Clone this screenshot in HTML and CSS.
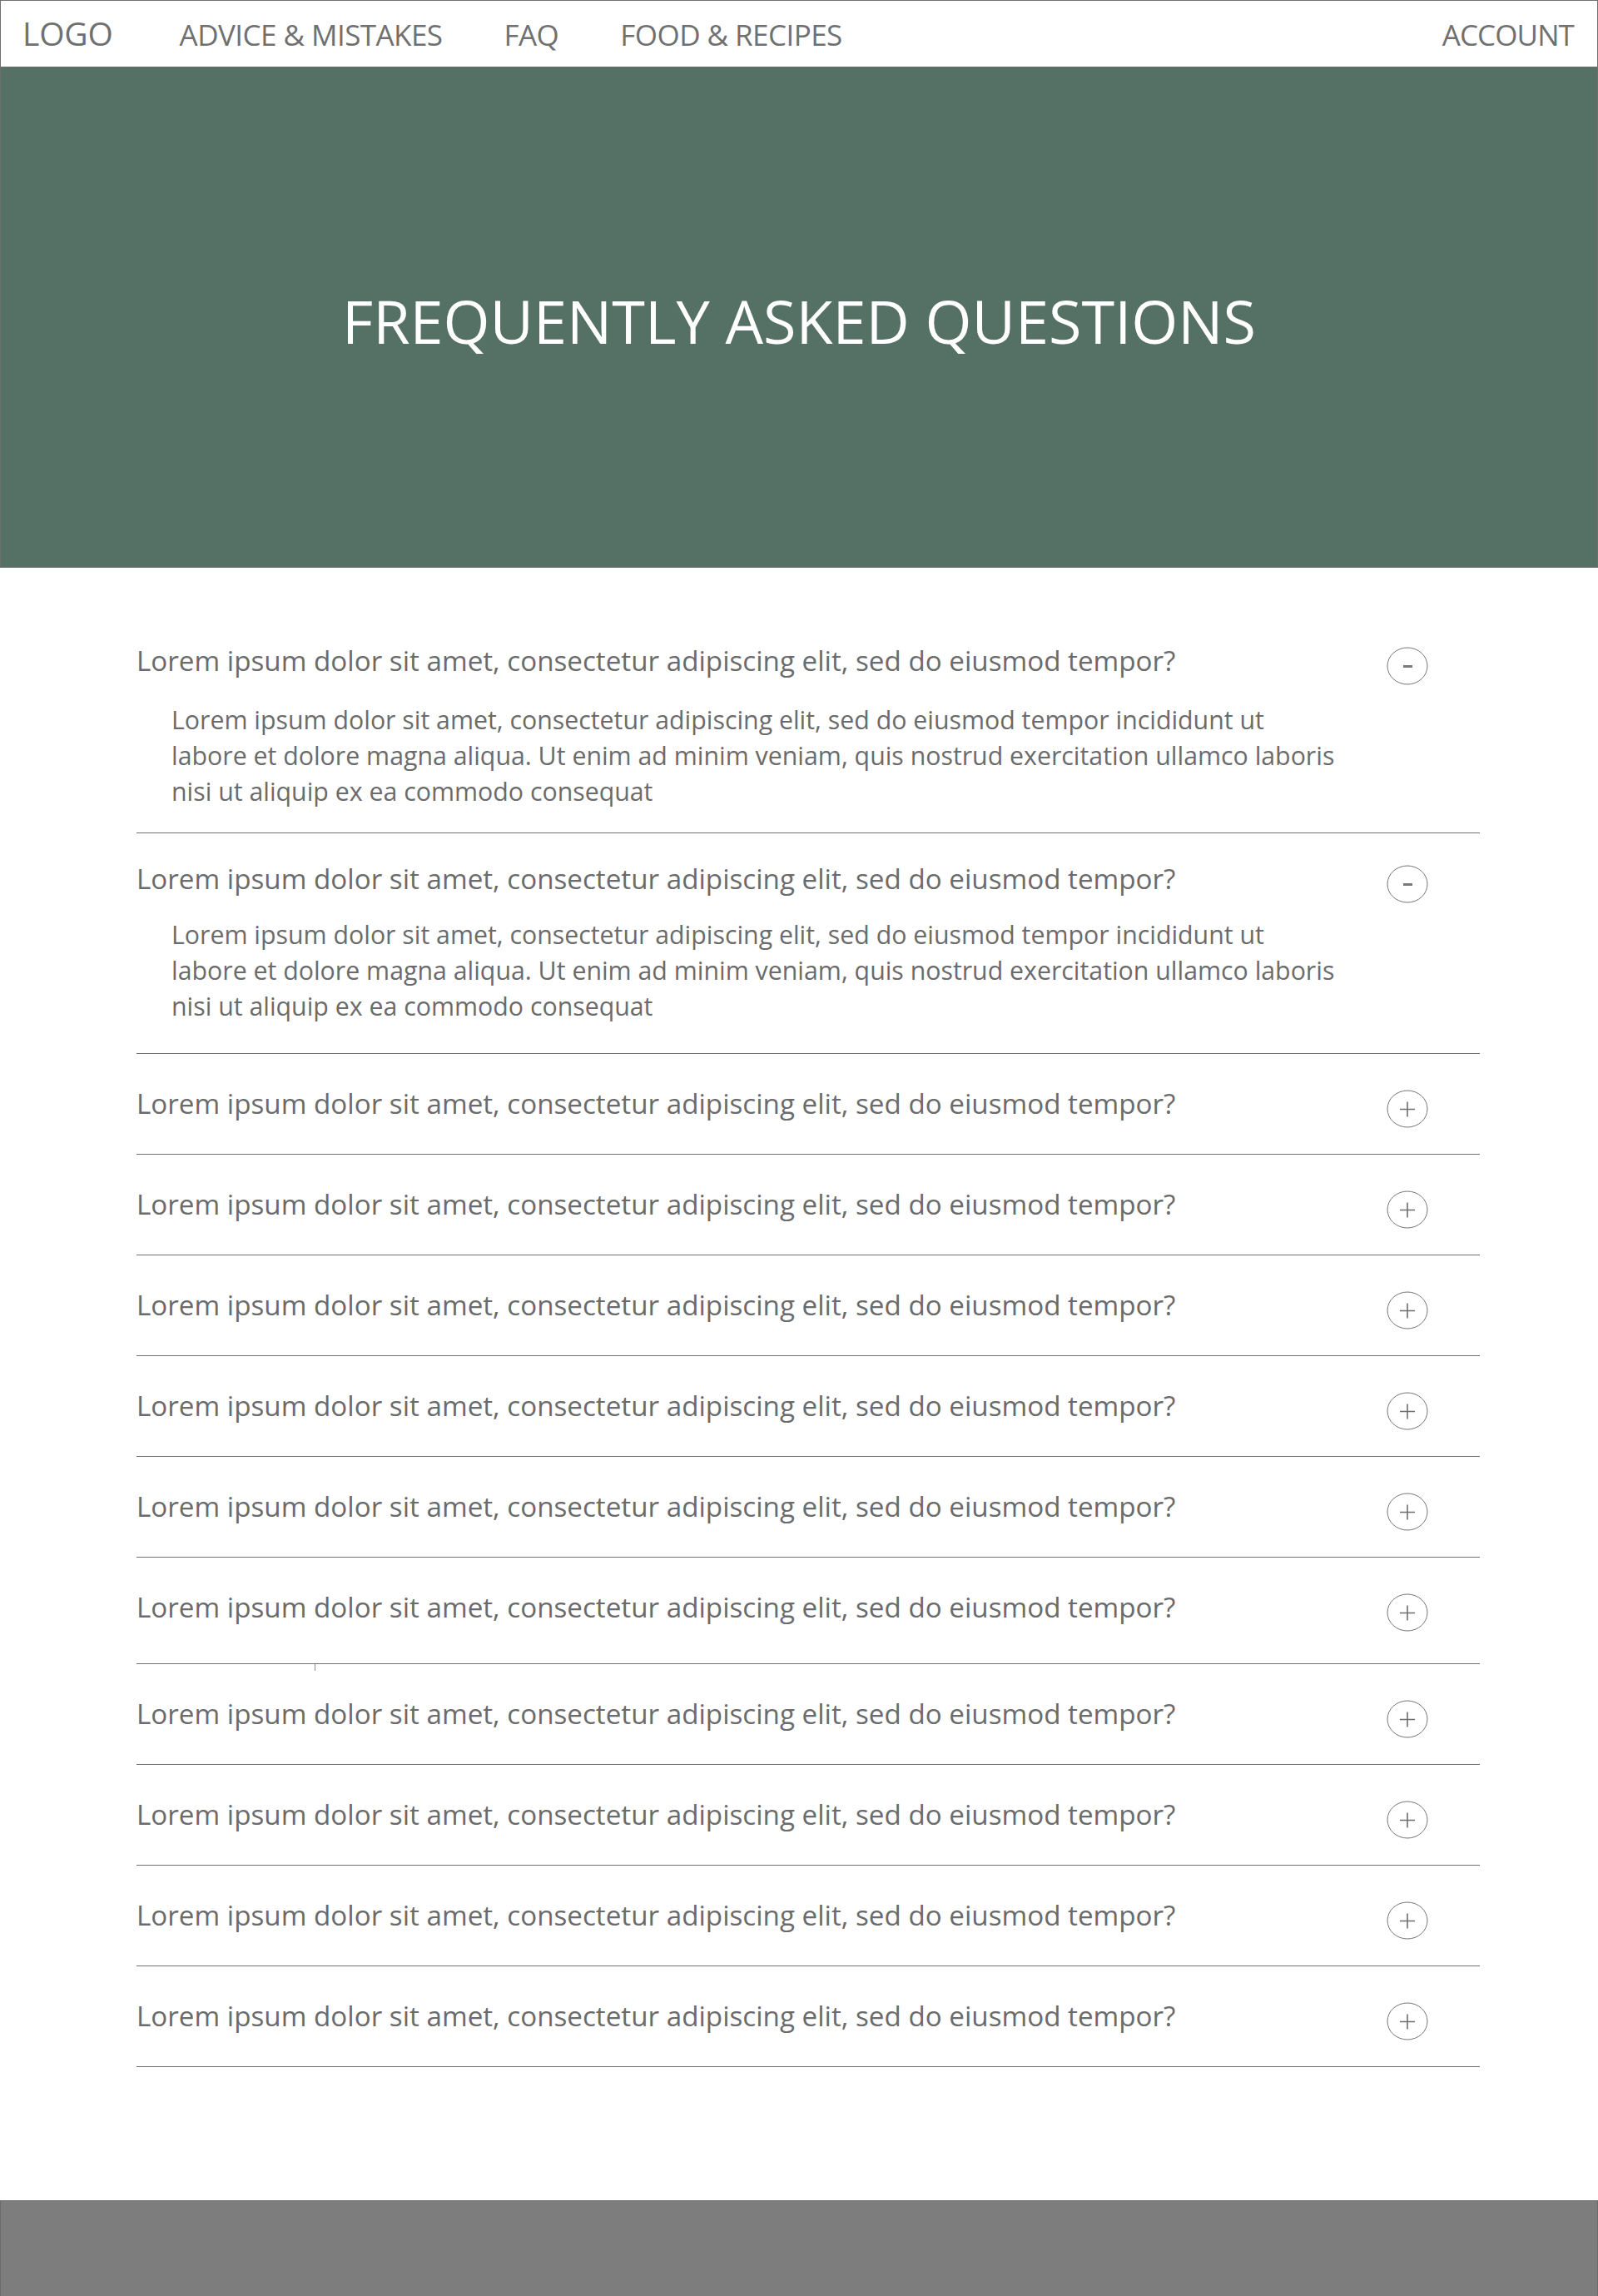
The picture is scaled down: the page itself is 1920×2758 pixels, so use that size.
FILE: index.html
```html
<!DOCTYPE html>
<html lang="en">
<head>
<meta charset="utf-8">
<title>FAQ</title>
<link rel="stylesheet" href="styles.css">
</head>
<body>
<header class="topbar">
  <div class="brand">LOGO</div>
  <nav class="menu">
    <a class="menu-link" href="#">ADVICE &amp; MISTAKES</a>
    <a class="menu-link" href="#">FAQ</a>
    <a class="menu-link" href="#">FOOD &amp; RECIPES</a>
  </nav>
  <a class="account" href="#">ACCOUNT</a>
</header>

<section class="hero">
  <h1 class="hero-title">FREQUENTLY ASKED QUESTIONS</h1>
</section>

<main class="faq">
  <ul class="faq-list">
    <li class="faq-item is-open">
      <div class="faq-body">
        <p class="faq-q">Lorem ipsum dolor sit amet, consectetur adipiscing elit, sed do eiusmod tempor?</p>
        <p class="faq-a">Lorem ipsum dolor sit amet, consectetur adipiscing elit, sed do eiusmod tempor incididunt ut labore et dolore magna aliqua. Ut enim ad minim veniam, quis nostrud exercitation ullamco laboris nisi ut aliquip ex ea commodo consequat</p>
      </div>
      <span class="toggle"><svg width="50" height="46" viewBox="0 0 50 46"><ellipse cx="25" cy="23" rx="24" ry="22" fill="none" stroke="#757575" stroke-width="1"/><line x1="20" y1="23.5" x2="31" y2="23.5" stroke="#7a7a7a" stroke-width="3"/></svg></span>
    </li>
    <li class="faq-item is-open">
      <div class="faq-body">
        <p class="faq-q">Lorem ipsum dolor sit amet, consectetur adipiscing elit, sed do eiusmod tempor?</p>
        <p class="faq-a">Lorem ipsum dolor sit amet, consectetur adipiscing elit, sed do eiusmod tempor incididunt ut labore et dolore magna aliqua. Ut enim ad minim veniam, quis nostrud exercitation ullamco laboris nisi ut aliquip ex ea commodo consequat</p>
      </div>
      <span class="toggle"><svg width="50" height="46" viewBox="0 0 50 46"><ellipse cx="25" cy="23" rx="24" ry="22" fill="none" stroke="#757575" stroke-width="1"/><line x1="20" y1="23.5" x2="31" y2="23.5" stroke="#7a7a7a" stroke-width="3"/></svg></span>
    </li>
    <li class="faq-item"><div class="faq-body"><p class="faq-q">Lorem ipsum dolor sit amet, consectetur adipiscing elit, sed do eiusmod tempor?</p></div><span class="toggle"><svg width="50" height="46" viewBox="0 0 50 46"><ellipse cx="25" cy="23" rx="24" ry="22" fill="none" stroke="#757575" stroke-width="1"/><path d="M16 23.5H34M25 14.5V32.5" stroke="#6e6e6e" stroke-width="1.6" fill="none"/></svg></span></li>
    <li class="faq-item"><div class="faq-body"><p class="faq-q">Lorem ipsum dolor sit amet, consectetur adipiscing elit, sed do eiusmod tempor?</p></div><span class="toggle"><svg width="50" height="46" viewBox="0 0 50 46"><ellipse cx="25" cy="23" rx="24" ry="22" fill="none" stroke="#757575" stroke-width="1"/><path d="M16 23.5H34M25 14.5V32.5" stroke="#6e6e6e" stroke-width="1.6" fill="none"/></svg></span></li>
    <li class="faq-item"><div class="faq-body"><p class="faq-q">Lorem ipsum dolor sit amet, consectetur adipiscing elit, sed do eiusmod tempor?</p></div><span class="toggle"><svg width="50" height="46" viewBox="0 0 50 46"><ellipse cx="25" cy="23" rx="24" ry="22" fill="none" stroke="#757575" stroke-width="1"/><path d="M16 23.5H34M25 14.5V32.5" stroke="#6e6e6e" stroke-width="1.6" fill="none"/></svg></span></li>
    <li class="faq-item"><div class="faq-body"><p class="faq-q">Lorem ipsum dolor sit amet, consectetur adipiscing elit, sed do eiusmod tempor?</p></div><span class="toggle"><svg width="50" height="46" viewBox="0 0 50 46"><ellipse cx="25" cy="23" rx="24" ry="22" fill="none" stroke="#757575" stroke-width="1"/><path d="M16 23.5H34M25 14.5V32.5" stroke="#6e6e6e" stroke-width="1.6" fill="none"/></svg></span></li>
    <li class="faq-item"><div class="faq-body"><p class="faq-q">Lorem ipsum dolor sit amet, consectetur adipiscing elit, sed do eiusmod tempor?</p></div><span class="toggle"><svg width="50" height="46" viewBox="0 0 50 46"><ellipse cx="25" cy="23" rx="24" ry="22" fill="none" stroke="#757575" stroke-width="1"/><path d="M16 23.5H34M25 14.5V32.5" stroke="#6e6e6e" stroke-width="1.6" fill="none"/></svg></span></li>
    <li class="faq-item is-tall"><div class="faq-body"><p class="faq-q">Lorem ipsum dolor sit amet, consectetur adipiscing elit, sed do eiusmod tempor?</p></div><span class="toggle"><svg width="50" height="46" viewBox="0 0 50 46"><ellipse cx="25" cy="23" rx="24" ry="22" fill="none" stroke="#757575" stroke-width="1"/><path d="M16 23.5H34M25 14.5V32.5" stroke="#6e6e6e" stroke-width="1.6" fill="none"/></svg></span></li>
    <li class="faq-item has-tick"><div class="faq-body"><p class="faq-q">Lorem ipsum dolor sit amet, consectetur adipiscing elit, sed do eiusmod tempor?</p></div><span class="toggle"><svg width="50" height="46" viewBox="0 0 50 46"><ellipse cx="25" cy="23" rx="24" ry="22" fill="none" stroke="#757575" stroke-width="1"/><path d="M16 23.5H34M25 14.5V32.5" stroke="#6e6e6e" stroke-width="1.6" fill="none"/></svg></span></li>
    <li class="faq-item"><div class="faq-body"><p class="faq-q">Lorem ipsum dolor sit amet, consectetur adipiscing elit, sed do eiusmod tempor?</p></div><span class="toggle"><svg width="50" height="46" viewBox="0 0 50 46"><ellipse cx="25" cy="23" rx="24" ry="22" fill="none" stroke="#757575" stroke-width="1"/><path d="M16 23.5H34M25 14.5V32.5" stroke="#6e6e6e" stroke-width="1.6" fill="none"/></svg></span></li>
    <li class="faq-item"><div class="faq-body"><p class="faq-q">Lorem ipsum dolor sit amet, consectetur adipiscing elit, sed do eiusmod tempor?</p></div><span class="toggle"><svg width="50" height="46" viewBox="0 0 50 46"><ellipse cx="25" cy="23" rx="24" ry="22" fill="none" stroke="#757575" stroke-width="1"/><path d="M16 23.5H34M25 14.5V32.5" stroke="#6e6e6e" stroke-width="1.6" fill="none"/></svg></span></li>
    <li class="faq-item"><div class="faq-body"><p class="faq-q">Lorem ipsum dolor sit amet, consectetur adipiscing elit, sed do eiusmod tempor?</p></div><span class="toggle"><svg width="50" height="46" viewBox="0 0 50 46"><ellipse cx="25" cy="23" rx="24" ry="22" fill="none" stroke="#757575" stroke-width="1"/><path d="M16 23.5H34M25 14.5V32.5" stroke="#6e6e6e" stroke-width="1.6" fill="none"/></svg></span></li>
  </ul>
</main>

<footer class="footer"></footer>
</body>
</html>
```

FILE: styles.css
```css
* { box-sizing: border-box; }
html, body { margin: 0; padding: 0; }
body {
  font-family: "Open Sans", "Noto Sans", sans-serif;
  color: #6b6b6b;
  background: #ffffff;
}
a { color: inherit; text-decoration: none; }

.topbar {
  height: 80px;
  display: flex;
  align-items: baseline;
  padding: 12px 28px 0 26px;
  border: 1px solid #707070;
  border-bottom: none;
  font-size: 35px;
  letter-spacing: -0.55px;
  color: #707070;
}
.brand { font-size: 39px; letter-spacing: -0.2px; margin-right: 80px; }
.menu { display: flex; align-items: baseline; gap: 74px; flex: 1; }
.account { margin-left: auto; letter-spacing: -0.9px; }

.hero {
  height: 602px;
  background: #557065;
  border: 1px solid #6f6f6f;
  display: flex;
  align-items: center;
  justify-content: center;
  padding-top: 8px;
}
.hero-title {
  margin: 0;
  font-weight: 400;
  font-size: 72px;
  color: #ffffff;
}

.faq { padding: 54px 142px 160px 164px; }
.faq-list { list-style: none; margin: 0; padding: 0; }
.faq-item {
  display: flex;
  align-items: flex-start;
  padding: 37px 62px 37px 0;
  border-bottom: 1px solid #707070;
  position: relative;
}
.faq-item.is-open { padding-top: 35px; padding-bottom: 28px; }
.faq-item.is-open + .faq-item.is-open { padding-top: 32px; padding-bottom: 35px; }
.faq-item.is-open + .faq-item.is-open .faq-a { margin-top: 22px; }
.faq-item.is-tall { padding-bottom: 44px; }
.faq-item.has-tick::before {
  content: "";
  position: absolute;
  left: 214px;
  top: 0;
  width: 1px;
  height: 8px;
  background: #8a8a8a;
}
.faq-body { flex: 1; }
.faq-q {
  margin: 0;
  font-size: 33.2px;
  line-height: 46px;
}
.faq-a {
  margin: 26px 0 0 42px;
  max-width: 1406px;
  font-size: 30.3px;
  line-height: 43px;
}
.toggle { display: block; width: 50px; height: 46px; margin: 6px 0 -6px; }
.toggle svg { display: block; }

.footer {
  height: 117px;
  background: #7d7d7d;
  border: 1px solid #6b6b6b;
}
```
